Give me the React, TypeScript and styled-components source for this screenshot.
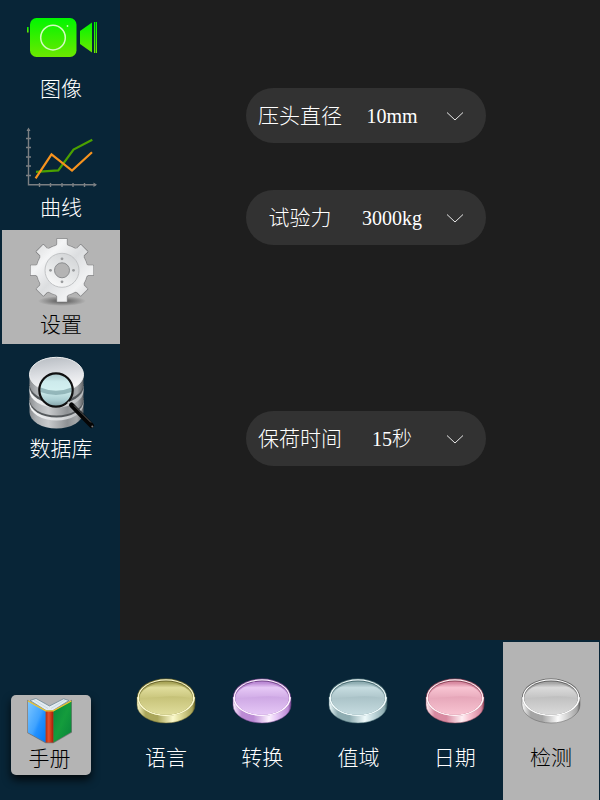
import React, { useState } from 'react';
import styled, { createGlobalStyle } from 'styled-components';

const GlobalStyle = createGlobalStyle`
  * { box-sizing: border-box; }
  body { margin: 0; background: #1e1e1e; }
  body, button, select {
    font-family: "Liberation Serif", "Noto Sans CJK SC", serif;
    font-weight: 300;
  }
`;

const Page = styled.div`
  display: flex;
  flex-direction: column;
  min-height: 100vh;
`;

const Workspace = styled.div`
  flex: 1;
  display: grid;
  grid-template-columns: 120px 1fr;
`;

const Sidebar = styled.nav`
  display: flex;
  flex-direction: column;
  gap: 3px;
  padding-left: 2px;
  background: #082537;
`;

const PlainButton = styled.button`
  display: flex;
  flex-direction: column;
  align-items: center;
  border: 0;
  cursor: pointer;
  font-size: 21px;
  line-height: 30px;
`;

const NavButton = styled(PlainButton)<{ $active?: boolean }>`
  padding: 8px 0 4px;
  color: ${(p) => (p.$active ? '#000' : '#fff')};
  background: ${(p) => (p.$active ? '#b4b4b4' : 'transparent')};
`;

const Icon = styled.svg`
  display: block;
  flex: none;
`;

const Settings = styled.main`
  display: flex;
  flex-direction: column;
  align-items: center;
  gap: 166px;
  padding: 88px 0 88px 12px;
  background: #1e1e1e;
`;

const Group = styled.section`
  display: flex;
  flex-direction: column;
  gap: 47px;
`;

const Field = styled.div`
  display: flex;
  align-items: center;
  width: 240px;
  height: 55px;
  border-radius: 28px;
  background: #323232;
  color: #fff;
`;

const FieldLabel = styled.label`
  flex: 1;
  padding-left: 4px;
  text-align: center;
  font-size: 21px;
  line-height: 30px;
  white-space: nowrap;
`;

const SelectBox = styled.div`
  display: grid;
  align-items: center;
  width: 136px;
  > * { grid-area: 1 / 1; }
`;

const Select = styled.select`
  appearance: none;
  width: 100%;
  height: 55px;
  padding: 0 52px 0 0;
  border: 0;
  border-radius: 0 28px 28px 0;
  background: transparent;
  color: #fff;
  font-size: 20px;
  line-height: 30px;
  text-align: center;
  text-align-last: center;
  cursor: pointer;
  option { background: #323232; }
`;

const Chevron = styled.svg`
  justify-self: end;
  margin-right: 22px;
  pointer-events: none;
`;

const Toolbar = styled.footer`
  display: grid;
  grid-template-columns: 118px repeat(5, 1fr);
  padding: 2px 1px 0 0;
  background: #082537;
`;

const ManualButton = styled(PlainButton)`
  align-self: end;
  width: 80px;
  margin: 0 0 25px 11px;
  padding: 3px 3px 1px 0;
  border-radius: 5px;
  background: #b4b4b4;
  color: #000;
  box-shadow: 0 5px 8px rgba(0, 0, 0, 0.75);
`;

const ToolButton = styled(PlainButton)<{ $active?: boolean }>`
  gap: 19px;
  padding: 36px 0 27px;
  color: ${(p) => (p.$active ? '#000' : '#fff')};
  background: ${(p) => (p.$active ? '#b4b4b4' : 'transparent')};
`;

const CameraIcon = () => (
  <Icon width="80" height="66" viewBox="21 8 80 66" aria-hidden="true">
    <defs>
      <linearGradient id="cam" x1="0" y1="0" x2="0" y2="1">
        <stop offset="0" stopColor="#00f600" />
        <stop offset="1" stopColor="#6ce800" />
      </linearGradient>
    </defs>
    <g fill="url(#cam)">
      <rect x="30" y="18" width="46.5" height="39" rx="6.5" />
      <rect x="27" y="27" width="1.6" height="5.5" />
      <path d="M80 31 L92 22.5 V52.5 L80 44 Z" />
      <rect x="94" y="22" width="1" height="31" />
      <rect x="95.6" y="22" width="1.4" height="31" />
    </g>
    <circle cx="53" cy="37.6" r="12.3" fill="none" stroke="#d4fbc0" strokeWidth="1.5" />
    <circle cx="67.5" cy="26" r="0.9" fill="#c8fab4" />
  </Icon>
);

const ChartIcon = () => (
  <Icon width="80" height="74" viewBox="21 119 80 74" aria-hidden="true">
    <g fill="none" stroke="#7b7f82" strokeWidth="1.4">
      <path d="M28.5 129 V184.7 H96" />
      <path d="M26 138.5 h5 M26 147.5 h5 M26 157 h5 M26 166 h5 M26 175.5 h5" />
      <path d="M39.5 183 v4 M50.5 183 v4 M62 183 v4 M73 183 v4 M84.5 183 v4" />
    </g>
    <path d="M28.5 127.5 L30.5 131 H26.5 Z M97 184.7 L93.5 182.5 V186.9 Z" fill="#7b7f82" />
    <path d="M36 171.8 L58.3 170.4 L73.5 149.5 L92.3 139.8" fill="none" stroke="#4ba000" strokeWidth="2.2" />
    <path d="M35.6 178.4 L51.5 154.4 L72 170.5 L92 152.3" fill="none" stroke="#f7931e" strokeWidth="2.2" />
  </Icon>
);

const gearPath = (() => {
  const points: string[] = [];
  for (let i = 0; i < 8; i += 1) {
    const a = (i * Math.PI) / 4;
    const at = (r: number, w: number) =>
      `${(62 + r * Math.cos(a) - w * Math.sin(a)).toFixed(2)} ${(270.3 + r * Math.sin(a) + w * Math.cos(a)).toFixed(2)}`;
    points.push(
      `${i ? 'A25.5 25.5 0 0 1' : 'M'} ${at(24.5, -6)} L${at(26, -4.8)} L${at(31.2, -4.8)} L${at(31.2, 4.8)} L${at(26, 4.8)} L${at(24.5, 6)}`
    );
  }
  return `${points.join(' ')} A25.5 25.5 0 0 1 86.5 264.3 Z`;
})();

const GearIcon = () => (
  <Icon width="80" height="72" viewBox="21 238 80 72" aria-hidden="true">
    <defs>
      <linearGradient id="gear" x1="0" y1="0" x2="1" y2="1">
        <stop offset="0" stopColor="#d4d5d6" />
        <stop offset="0.28" stopColor="#f4f5f6" />
        <stop offset="0.5" stopColor="#dcdee0" />
        <stop offset="0.75" stopColor="#f1f2f3" />
        <stop offset="1" stopColor="#d0d1d3" />
      </linearGradient>
      <linearGradient id="hub" x1="0.8" y1="0" x2="0.2" y2="1">
        <stop offset="0" stopColor="#d2d4d6" />
        <stop offset="0.5" stopColor="#e4e6e7" />
        <stop offset="1" stopColor="#fafafa" />
      </linearGradient>
      <radialGradient id="gearShade">
        <stop offset="0" stopColor="#3c3c3c" stopOpacity="0.8" />
        <stop offset="1" stopColor="#3c3c3c" stopOpacity="0" />
      </radialGradient>
    </defs>
    <ellipse cx="62" cy="301" rx="24" ry="5" fill="url(#gearShade)" />
    <path d={gearPath} fill="#77787a" stroke="#77787a" strokeWidth="1.6" strokeLinejoin="round" />
    <path d={gearPath} fill="url(#gear)" stroke="#f7f7f7" strokeWidth="0.4" />
    <circle cx="62" cy="270.3" r="17" fill="url(#hub)" stroke="#c1c3c5" strokeWidth="1" />
    <circle cx="62" cy="270.3" r="7.5" fill="#b4b4b4" stroke="#8b8d8f" strokeWidth="1" />
    <g fill="#989a9c">
      <circle cx="62" cy="258.8" r="1.4" />
      <circle cx="62" cy="281.8" r="1.4" />
      <circle cx="50.5" cy="270.3" r="1.4" />
      <circle cx="73.5" cy="270.3" r="1.4" />
    </g>
  </Icon>
);

const DatabaseIcon = () => (
  <Icon width="80" height="79" viewBox="21 355 80 79" aria-hidden="true">
    <defs>
      <linearGradient id="disk" x1="0" y1="0" x2="1" y2="0">
        <stop offset="0" stopColor="#8c8f92" />
        <stop offset="0.12" stopColor="#adb0b3" />
        <stop offset="0.35" stopColor="#c9cbcd" />
        <stop offset="0.7" stopColor="#8f9295" />
        <stop offset="0.88" stopColor="#a5a8aa" />
        <stop offset="1" stopColor="#606366" />
      </linearGradient>
      <linearGradient id="ledge" x1="0" y1="0" x2="1" y2="0">
        <stop offset="0" stopColor="#f4f5f6" />
        <stop offset="0.6" stopColor="#d9dbdd" />
        <stop offset="1" stopColor="#b5b8ba" />
      </linearGradient>
      <linearGradient id="diskTop" x1="0" y1="0" x2="0.2" y2="1">
        <stop offset="0" stopColor="#b5bac0" />
        <stop offset="0.6" stopColor="#e0e2e6" />
        <stop offset="1" stopColor="#fafafa" />
      </linearGradient>
      <linearGradient id="glass" x1="0" y1="0" x2="0" y2="1">
        <stop offset="0" stopColor="#a9c6ca" />
        <stop offset="0.25" stopColor="#cdebec" />
        <stop offset="0.5" stopColor="#d3f0f0" />
        <stop offset="0.8" stopColor="#aacdd1" />
        <stop offset="1" stopColor="#83a1a7" />
      </linearGradient>
    </defs>
    <path d="M29.5 403 V412 A27 16.5 0 0 0 83.5 412 V403 Z" fill="url(#disk)" />
    <path d="M29.5 400 V404 A27 16.5 0 0 0 83.5 404 V400 Z" fill="url(#ledge)" />
    <path d="M29.5 398 V401 A27 16.5 0 0 0 83.5 401 V398 Z" fill="#54585b" />
    <path d="M29.5 389 V399 A27 16.5 0 0 0 83.5 399 V389 Z" fill="url(#disk)" />
    <path d="M29.5 386 V391 A27 16.5 0 0 0 83.5 391 V386 Z" fill="url(#ledge)" />
    <path d="M29.5 384 V387 A27 16.5 0 0 0 83.5 387 V384 Z" fill="#54585b" />
    <path d="M29.5 374 V384 A27 17 0 0 0 83.5 384 V374 Z" fill="url(#disk)" />
    <ellipse cx="56.5" cy="374.5" rx="27" ry="17.2" fill="url(#diskTop)" stroke="#eceeef" strokeWidth="1" />
    <circle cx="56" cy="390" r="16.7" fill="url(#glass)" />
    <path d="M40.5 387.5 Q56 394 71.5 387.5 V392 Q56 398 40.5 392 Z" fill="#82a7ab" opacity="0.75" />
    <circle cx="56" cy="390" r="16.7" fill="none" stroke="#101010" strokeWidth="2.2" />
    <path d="M68 402 L71.5 405.5" stroke="#bfc3c6" strokeWidth="2" />
    <path d="M71.5 405 L91.5 425.5" stroke="#050505" strokeWidth="5" strokeLinecap="round" />
    <path d="M74 405.5 L91 422.5" stroke="#777" strokeWidth="0.8" />
    <circle cx="92.3" cy="426.5" r="1" fill="#777" />
  </Icon>
);

const BookIcon = () => (
  <Icon width="50" height="46" viewBox="25 698 50 46" aria-hidden="true">
    <defs>
      <linearGradient id="bookBlue" x1="0" y1="0" x2="1" y2="1">
        <stop offset="0" stopColor="#7cc6ff" />
        <stop offset="0.5" stopColor="#40a3ff" />
        <stop offset="0.6" stopColor="#2391ff" />
        <stop offset="1" stopColor="#0079f5" />
      </linearGradient>
      <linearGradient id="bookRed" x1="0" y1="0" x2="1" y2="0">
        <stop offset="0" stopColor="#b92a0c" />
        <stop offset="0.4" stopColor="#e4532f" />
        <stop offset="1" stopColor="#a81b05" />
      </linearGradient>
      <linearGradient id="bookGreen" x1="0" y1="0" x2="1" y2="1">
        <stop offset="0" stopColor="#05853a" />
        <stop offset="0.5" stopColor="#149c3c" />
        <stop offset="1" stopColor="#07823a" />
      </linearGradient>
    </defs>
    <path d="M28 701 L45.7 711 H53.3 L71.3 701 V732 L53.3 742.5 H45.7 L28 732.5 Z" fill="#777" stroke="#777" strokeWidth="1.4" />
    <path d="M30 700.5 L36 698.5 L49.5 706 L63.5 698.8 L69 700.5 L53 710.5 H46 Z" fill="#e4edf2" stroke="#718894" strokeWidth="0.8" />
    <path d="M34 700 L48 708.5 M65 700 L51 708.5" stroke="#c0d0d8" strokeWidth="0.7" />
    <path d="M28 701 L45.7 711 V742.5 L28 732.5 Z" fill="url(#bookBlue)" />
    <path d="M53.3 711 L71.3 701 V732 L53.3 742.5 Z" fill="url(#bookGreen)" />
    <rect x="45.7" y="711" width="7.6" height="31.5" fill="url(#bookRed)" />
    <path d="M28 701 L45.7 710.8 H53.3 L71.3 701" fill="none" stroke="#efc62d" strokeWidth="1.3" />
  </Icon>
);

type CoinTone = { rim: string; light: string; face: string; mid: string; dark: string };

const CoinIcon = ({ id, tone }: { id: string; tone: CoinTone }) => (
  <Icon width="60" height="46" viewBox="0 0 60 46" aria-hidden="true">
    <defs>
      <linearGradient id={`${id}Side`} x1="0" y1="0" x2="1" y2="0">
        <stop offset="0" stopColor={tone.rim} />
        <stop offset="0.15" stopColor={tone.mid} />
        <stop offset="0.35" stopColor={tone.mid} />
        <stop offset="0.62" stopColor={tone.rim} />
        <stop offset="0.75" stopColor={tone.light} />
        <stop offset="0.95" stopColor={tone.mid} />
        <stop offset="1" stopColor={tone.dark} />
      </linearGradient>
      <linearGradient id={`${id}Face`} x1="0" y1="0" x2="0" y2="1">
        <stop offset="0" stopColor={tone.mid} />
        <stop offset="0.5" stopColor={tone.face} />
        <stop offset="1" stopColor={tone.light} />
      </linearGradient>
      <linearGradient id={`${id}Gloss`} x1="0" y1="0" x2="0" y2="1">
        <stop offset="0" stopColor={tone.mid} />
        <stop offset="0.3" stopColor={tone.light} />
        <stop offset="1" stopColor={tone.face} />
      </linearGradient>
    </defs>
    <path d="M1 19 V27 A29 18 0 0 0 59 27 V19 Z" fill={`url(#${id}Side)`} stroke={tone.dark} strokeWidth="0.5" />
    <ellipse cx="30" cy="19.3" rx="29" ry="18.7" fill={tone.dark} />
    <path d="M1 19.3 A29 18.7 0 0 0 59 19.3 Z" fill={tone.rim} />
    <ellipse cx="30" cy="19.6" rx="28.3" ry="18.3" fill={tone.rim} />
    <ellipse cx="30" cy="19.5" rx="27" ry="17" fill={tone.dark} />
    <ellipse cx="30" cy="20" rx="26.8" ry="16.6" fill={tone.mid} />
    <path d="M3.2 20 A26.8 16.8 0 0 0 56.8 20 A26.8 15.2 0 0 0 3.2 20 Z" fill={`url(#${id}Face)`} />
    <path d="M3.6 20.4 A26.4 15.4 0 0 1 56.4 20.4 Q43 17.5 30 18.5 Q15 19.5 3.6 20.4 Z" fill={`url(#${id}Gloss)`} />
  </Icon>
);

const navItems = [
  { name: '图像', Picture: CameraIcon },
  { name: '曲线', Picture: ChartIcon },
  { name: '设置', Picture: GearIcon },
  { name: '数据库', Picture: DatabaseIcon },
];

const tools: { id: string; name: string; tone: CoinTone }[] = [
  { id: 'language', name: '语言', tone: { rim: '#fbf9cc', light: '#e0dd9c', face: '#c9c57c', mid: '#aaa65a', dark: '#69652a' } },
  { id: 'convert', name: '转换', tone: { rim: '#fdf2ff', light: '#e6c8f6', face: '#d0abe6', mid: '#bc8bd5', dark: '#74458c' } },
  { id: 'range', name: '值域', tone: { rim: '#effafb', light: '#c6dce0', face: '#adc5ca', mid: '#8fadb2', dark: '#476a70' } },
  { id: 'date', name: '日期', tone: { rim: '#fff0f4', light: '#f8c4d2', face: '#e8aabc', mid: '#d88aa1', dark: '#8d4459' } },
  { id: 'detect', name: '检测', tone: { rim: '#fcfcfc', light: '#dadada', face: '#c3c3c3', mid: '#a5a5a5', dark: '#616161' } },
];

type SettingProps = { id: string; label: string; options: string[] };

const Setting = ({ id, label, options }: SettingProps) => (
  <Field>
    <FieldLabel htmlFor={id}>{label}</FieldLabel>
    <SelectBox>
      <Select id={id}>
        {options.map((o) => (
          <option key={o}>{o}</option>
        ))}
      </Select>
      <Chevron width="18" height="10" viewBox="0 0 18 10" aria-hidden="true">
        <path d="M1 1.5 L9 9 L17 1.5" fill="none" stroke="#e8e8e8" strokeWidth="1" />
      </Chevron>
    </SelectBox>
  </Field>
);

export default function App() {
  const [page, setPage] = useState('设置');
  const [tool, setTool] = useState('detect');
  return (
    <Page>
      <GlobalStyle />
      <Workspace>
        <Sidebar>
          {navItems.map(({ name, Picture }) => (
            <NavButton key={name} $active={page === name} onClick={() => setPage(name)}>
              <Picture />
              {name}
            </NavButton>
          ))}
        </Sidebar>
        <Settings>
          <Group>
            <Setting id="diameter" label="压头直径" options={['10mm', '5mm', '2.5mm']} />
            <Setting id="force" label="试验力" options={['3000kg', '1500kg', '1000kg']} />
          </Group>
          <Group>
            <Setting id="dwell" label="保荷时间" options={['15秒', '30秒', '60秒']} />
          </Group>
        </Settings>
      </Workspace>
      <Toolbar>
        <ManualButton>
          <BookIcon />
          手册
        </ManualButton>
        {tools.map(({ id, name, tone }) => (
          <ToolButton key={id} $active={tool === id} onClick={() => setTool(id)}>
            <CoinIcon id={id} tone={tone} />
            {name}
          </ToolButton>
        ))}
      </Toolbar>
    </Page>
  );
}
